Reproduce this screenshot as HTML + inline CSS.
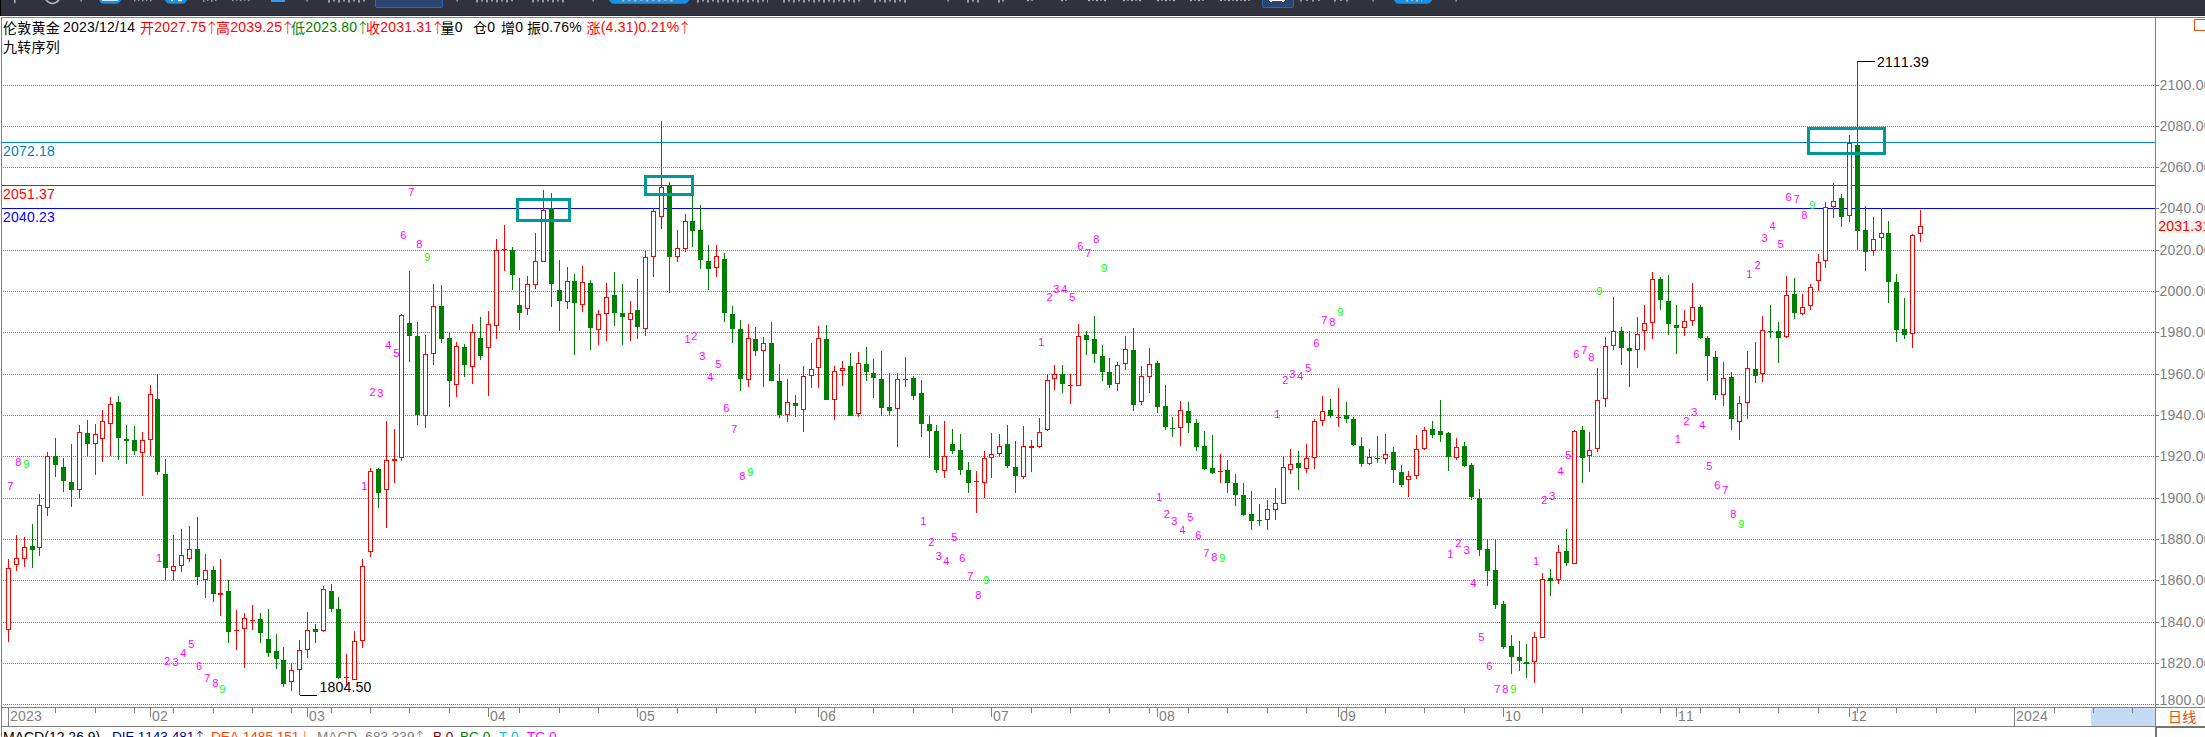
<!DOCTYPE html><html><head><meta charset="utf-8"><title>伦敦黄金 日线</title><style>
html,body{margin:0;padding:0;background:#fff;}
body{font-kerning:none;width:2205px;height:737px;overflow:hidden;position:relative;font-family:"Liberation Sans","Noto Sans CJK SC",sans-serif;}
#c{position:absolute;left:0;top:0;}
.t{position:absolute;white-space:nowrap;font-size:14px;line-height:16px;letter-spacing:0.21px}
.cj{position:relative;top:1px}.ar{font-family:"Noto Sans CJK SC",sans-serif;letter-spacing:0;margin-left:-1.5px;font-weight:300;line-height:0;vertical-align:-1px}.r{color:#ff0000}.g{color:#008000}.k{color:#000}
svg text{font-kerning:none;font-family:"Liberation Sans","Noto Sans CJK SC",sans-serif;letter-spacing:0.21px}svg text.m{letter-spacing:0}
</style></head><body>
<svg id="c" width="2205" height="737" viewBox="0 0 2205 737" shape-rendering="crispEdges">
<rect x="0" y="0" width="2205" height="16" fill="#30333e"/>
<rect x="0" y="15" width="2205" height="1" fill="#262933"/>
<rect x="0" y="0" width="1" height="16" fill="#000"/>
<g shape-rendering="auto">
<rect x="14" y="0" width="1.5" height="3.2" fill="#b4b6c2" opacity="1"/>
<rect x="13" y="1.6" width="2" height="-0.40000000000000013" fill="#b4b6c2" opacity="1"/>
<path d="M46,0 Q52.5,7 59,0" fill="none" stroke="#b4b6c2" stroke-width="1.6"/>
<rect x="80.5" y="0" width="1.2000000000000028" height="1.6" fill="#b4b6c2" opacity="1"/>
<path d="M99,0 L100,1.7999999999999998 Q101,3.8 104,3.8 L116,3.8 Q119,3.8 120,1.7999999999999998 L121,0 Z" fill="#1a8fe3"/>
<rect x="102" y="0" width="16" height="0.8" fill="#fff" opacity="1"/>
<rect x="134" y="0" width="1.5" height="1.4" fill="#b4b6c2" opacity="0.8"/>
<rect x="138" y="0" width="1.5" height="0.84" fill="#b4b6c2" opacity="0.8"/>
<rect x="142" y="0" width="1.5" height="1.4" fill="#b4b6c2" opacity="0.8"/>
<rect x="146" y="0" width="1.5" height="0.84" fill="#b4b6c2" opacity="0.8"/>
<rect x="150" y="0" width="1.5" height="1.4" fill="#b4b6c2" opacity="0.8"/>
<path d="M165,0 L166,1.7999999999999998 Q167,3.8 170,3.8 L182,3.8 Q185,3.8 186,1.7999999999999998 L187,0 Z" fill="#1a8fe3"/>
<rect x="171" y="0" width="2" height="1.2" fill="#fff" opacity="1"/>
<rect x="178" y="0" width="4" height="1.2" fill="#fff" opacity="1"/>
<rect x="203" y="0" width="1.5" height="1.8" fill="#b4b6c2" opacity="0.8"/>
<rect x="207" y="0" width="1.5" height="1.08" fill="#b4b6c2" opacity="0.8"/>
<rect x="211" y="0" width="1.5" height="1.8" fill="#b4b6c2" opacity="0.8"/>
<rect x="215" y="0" width="1.5" height="1.08" fill="#b4b6c2" opacity="0.8"/>
<rect x="232" y="0" width="1.5" height="1.2" fill="#b4b6c2" opacity="0.8"/>
<rect x="236" y="0" width="1.5" height="0.72" fill="#b4b6c2" opacity="0.8"/>
<rect x="240" y="0" width="1.5" height="1.2" fill="#b4b6c2" opacity="0.8"/>
<rect x="244" y="0" width="1.5" height="0.72" fill="#b4b6c2" opacity="0.8"/>
<rect x="248" y="0" width="1.5" height="1.2" fill="#b4b6c2" opacity="0.8"/>
<rect x="271" y="0" width="14" height="2" fill="#3a98ea" opacity="1"/>
<rect x="306.5" y="0" width="1.1999999999999886" height="1.6" fill="#b4b6c2" opacity="1"/>
<rect x="328" y="0" width="2" height="2.6" fill="#b4b6c2" opacity="0.8"/>
<rect x="333" y="0" width="2" height="1.56" fill="#b4b6c2" opacity="0.8"/>
<rect x="338" y="0" width="2" height="2.6" fill="#b4b6c2" opacity="0.8"/>
<rect x="343" y="0" width="2" height="1.56" fill="#b4b6c2" opacity="0.8"/>
<rect x="348" y="0" width="2" height="2.6" fill="#b4b6c2" opacity="0.8"/>
<rect x="353" y="0" width="2" height="1.56" fill="#b4b6c2" opacity="0.8"/>
<rect x="358" y="0" width="2" height="2.6" fill="#b4b6c2" opacity="0.8"/>
<rect x="363" y="0" width="2" height="1.56" fill="#b4b6c2" opacity="0.8"/>
<rect x="375.5" y="-3" width="67" height="10.5" rx="1.5" fill="#2a4572" stroke="#3a64a8" stroke-width="1"/>
<rect x="456.5" y="0" width="1.1999999999999886" height="1.6" fill="#b4b6c2" opacity="1"/>
<rect x="476" y="0" width="2" height="2.4" fill="#b4b6c2" opacity="0.8"/>
<rect x="481" y="0" width="2" height="1.44" fill="#b4b6c2" opacity="0.8"/>
<rect x="486" y="0" width="2" height="2.4" fill="#b4b6c2" opacity="0.8"/>
<rect x="491" y="0" width="2" height="1.44" fill="#b4b6c2" opacity="0.8"/>
<rect x="496" y="0" width="2" height="2.4" fill="#b4b6c2" opacity="0.8"/>
<rect x="501" y="0" width="2" height="1.44" fill="#b4b6c2" opacity="0.8"/>
<rect x="506" y="0" width="2" height="2.4" fill="#b4b6c2" opacity="0.8"/>
<rect x="511" y="0" width="2" height="1.44" fill="#b4b6c2" opacity="0.8"/>
<rect x="532" y="0" width="2" height="2.4" fill="#b4b6c2" opacity="0.8"/>
<rect x="537" y="0" width="2" height="1.44" fill="#b4b6c2" opacity="0.8"/>
<rect x="542" y="0" width="2" height="2.4" fill="#b4b6c2" opacity="0.8"/>
<rect x="547" y="0" width="2" height="1.44" fill="#b4b6c2" opacity="0.8"/>
<rect x="552" y="0" width="2" height="2.4" fill="#b4b6c2" opacity="0.8"/>
<rect x="557" y="0" width="2" height="1.44" fill="#b4b6c2" opacity="0.8"/>
<rect x="562" y="0" width="2" height="2.4" fill="#b4b6c2" opacity="0.8"/>
<rect x="592.5" y="0" width="1.2000000000000455" height="1.6" fill="#b4b6c2" opacity="1"/>
<path d="M609,0 L610,1.7999999999999998 Q611,3.8 614,3.8 L684,3.8 Q687,3.8 688,1.7999999999999998 L689,0 Z" fill="#1a8fe3"/>
<rect x="622" y="0" width="2.5" height="1.4" fill="#b4b6c2" opacity="1"/>
<rect x="628" y="0" width="2.5" height="0.84" fill="#b4b6c2" opacity="1"/>
<rect x="634" y="0" width="2.5" height="1.4" fill="#b4b6c2" opacity="1"/>
<rect x="640" y="0" width="2.5" height="0.84" fill="#b4b6c2" opacity="1"/>
<rect x="646" y="0" width="2.5" height="1.4" fill="#b4b6c2" opacity="1"/>
<rect x="652" y="0" width="2.5" height="0.84" fill="#b4b6c2" opacity="1"/>
<rect x="658" y="0" width="2.5" height="1.4" fill="#b4b6c2" opacity="1"/>
<rect x="664" y="0" width="2.5" height="0.84" fill="#b4b6c2" opacity="1"/>
<rect x="670" y="0" width="2.5" height="1.4" fill="#b4b6c2" opacity="1"/>
<rect x="697" y="0" width="2" height="2.6" fill="#b4b6c2" opacity="0.8"/>
<rect x="702" y="0" width="2" height="1.56" fill="#b4b6c2" opacity="0.8"/>
<rect x="707" y="0" width="2" height="2.6" fill="#b4b6c2" opacity="0.8"/>
<rect x="712" y="0" width="2" height="1.56" fill="#b4b6c2" opacity="0.8"/>
<rect x="717" y="0" width="2" height="2.6" fill="#b4b6c2" opacity="0.8"/>
<rect x="722" y="0" width="2" height="1.56" fill="#b4b6c2" opacity="0.8"/>
<rect x="727" y="0" width="2" height="2.6" fill="#b4b6c2" opacity="0.8"/>
<rect x="732" y="0" width="2" height="1.56" fill="#b4b6c2" opacity="0.8"/>
<rect x="737" y="0" width="2" height="2.6" fill="#b4b6c2" opacity="0.8"/>
<rect x="742" y="0" width="2" height="1.56" fill="#b4b6c2" opacity="0.8"/>
<rect x="747" y="0" width="2" height="2.6" fill="#b4b6c2" opacity="0.8"/>
<rect x="752" y="0" width="2" height="1.56" fill="#b4b6c2" opacity="0.8"/>
<rect x="757" y="0" width="2" height="2.6" fill="#b4b6c2" opacity="0.8"/>
<rect x="762" y="0" width="2" height="1.56" fill="#b4b6c2" opacity="0.8"/>
<rect x="767" y="0" width="1" height="2.6" fill="#b4b6c2" opacity="0.8"/>
<rect x="783" y="0" width="2" height="2.6" fill="#b4b6c2" opacity="0.8"/>
<rect x="788" y="0" width="2" height="1.56" fill="#b4b6c2" opacity="0.8"/>
<rect x="793" y="0" width="2" height="2.6" fill="#b4b6c2" opacity="0.8"/>
<rect x="798" y="0" width="2" height="1.56" fill="#b4b6c2" opacity="0.8"/>
<rect x="803" y="0" width="2" height="2.6" fill="#b4b6c2" opacity="0.8"/>
<rect x="808" y="0" width="2" height="1.56" fill="#b4b6c2" opacity="0.8"/>
<rect x="813" y="0" width="2" height="2.6" fill="#b4b6c2" opacity="0.8"/>
<rect x="818" y="0" width="2" height="1.56" fill="#b4b6c2" opacity="0.8"/>
<rect x="823" y="0" width="2" height="2.6" fill="#b4b6c2" opacity="0.8"/>
<rect x="828" y="0" width="2" height="1.56" fill="#b4b6c2" opacity="0.8"/>
<rect x="833" y="0" width="2" height="2.6" fill="#b4b6c2" opacity="0.8"/>
<rect x="838" y="0" width="2" height="1.56" fill="#b4b6c2" opacity="0.8"/>
<rect x="843" y="0" width="2" height="2.6" fill="#b4b6c2" opacity="0.8"/>
<rect x="848" y="0" width="2" height="1.56" fill="#b4b6c2" opacity="0.8"/>
<rect x="853" y="0" width="2" height="2.6" fill="#b4b6c2" opacity="0.8"/>
<rect x="858" y="0" width="2" height="1.56" fill="#b4b6c2" opacity="0.8"/>
<rect x="874" y="0" width="2" height="2.6" fill="#b4b6c2" opacity="0.8"/>
<rect x="879" y="0" width="2" height="1.56" fill="#b4b6c2" opacity="0.8"/>
<rect x="884" y="0" width="2" height="2.6" fill="#b4b6c2" opacity="0.8"/>
<rect x="889" y="0" width="2" height="1.56" fill="#b4b6c2" opacity="0.8"/>
<rect x="894" y="0" width="2" height="2.6" fill="#b4b6c2" opacity="0.8"/>
<rect x="899" y="0" width="2" height="1.56" fill="#b4b6c2" opacity="0.8"/>
<rect x="904" y="0" width="2" height="2.6" fill="#b4b6c2" opacity="0.8"/>
<rect x="947.5" y="0" width="1.2000000000000455" height="1.6" fill="#b4b6c2" opacity="1"/>
<rect x="967" y="0" width="2" height="2.6" fill="#b4b6c2" opacity="0.8"/>
<rect x="972" y="0" width="2" height="1.56" fill="#b4b6c2" opacity="0.8"/>
<rect x="977" y="0" width="2" height="2.6" fill="#b4b6c2" opacity="0.8"/>
<rect x="998" y="0" width="2" height="2.6" fill="#b4b6c2" opacity="0.8"/>
<rect x="1002" y="0" width="2" height="1.56" fill="#b4b6c2" opacity="0.8"/>
<rect x="1027" y="0" width="2" height="1.2" fill="#b4b6c2" opacity="1"/>
<rect x="1031" y="0" width="2" height="0.72" fill="#b4b6c2" opacity="1"/>
<rect x="1061" y="0" width="2" height="1.2" fill="#b4b6c2" opacity="1"/>
<rect x="1065" y="0" width="2" height="0.72" fill="#b4b6c2" opacity="1"/>
<rect x="1088" y="0" width="2" height="1.2" fill="#b4b6c2" opacity="1"/>
<rect x="1092" y="0" width="2" height="0.72" fill="#b4b6c2" opacity="1"/>
<rect x="1096" y="0" width="2" height="1.2" fill="#b4b6c2" opacity="1"/>
<rect x="1100" y="0" width="2" height="0.72" fill="#b4b6c2" opacity="1"/>
<rect x="1104" y="0" width="2" height="1.2" fill="#b4b6c2" opacity="1"/>
<rect x="1123" y="0" width="2" height="1.2" fill="#b4b6c2" opacity="1"/>
<rect x="1127" y="0" width="2" height="0.72" fill="#b4b6c2" opacity="1"/>
<rect x="1131" y="0" width="2" height="1.2" fill="#b4b6c2" opacity="1"/>
<rect x="1135" y="0" width="2" height="0.72" fill="#b4b6c2" opacity="1"/>
<rect x="1139" y="0" width="2" height="1.2" fill="#b4b6c2" opacity="1"/>
<rect x="1157" y="0" width="2" height="1.2" fill="#b4b6c2" opacity="1"/>
<rect x="1161" y="0" width="2" height="0.72" fill="#b4b6c2" opacity="1"/>
<rect x="1165" y="0" width="2" height="1.2" fill="#b4b6c2" opacity="1"/>
<rect x="1169" y="0" width="2" height="0.72" fill="#b4b6c2" opacity="1"/>
<rect x="1173" y="0" width="2" height="1.2" fill="#b4b6c2" opacity="1"/>
<rect x="1190" y="0" width="2" height="1.2" fill="#b4b6c2" opacity="1"/>
<rect x="1194" y="0" width="2" height="0.72" fill="#b4b6c2" opacity="1"/>
<rect x="1198" y="0" width="2" height="1.2" fill="#b4b6c2" opacity="1"/>
<rect x="1202" y="0" width="2" height="0.72" fill="#b4b6c2" opacity="1"/>
<rect x="1220" y="0" width="2" height="1.2" fill="#b4b6c2" opacity="1"/>
<rect x="1224" y="0" width="2" height="0.72" fill="#b4b6c2" opacity="1"/>
<rect x="1228" y="0" width="2" height="1.2" fill="#b4b6c2" opacity="1"/>
<rect x="1232" y="0" width="2" height="0.72" fill="#b4b6c2" opacity="1"/>
<rect x="1236" y="0" width="2" height="1.2" fill="#b4b6c2" opacity="1"/>
<rect x="1240" y="0" width="2" height="0.72" fill="#b4b6c2" opacity="1"/>
<rect x="1244" y="0" width="2" height="1.2" fill="#b4b6c2" opacity="1"/>
<rect x="1248" y="0" width="2" height="0.72" fill="#b4b6c2" opacity="1"/>
<rect x="1262.5" y="-3" width="31" height="10.5" rx="1.5" fill="#2a4572" stroke="#3a64a8" stroke-width="1"/>
<rect x="1269" y="0" width="16" height="1" fill="#fff" opacity="1"/>
<rect x="1270" y="0" width="2" height="2" fill="#fff" opacity="1"/>
<rect x="1282" y="0" width="2" height="2" fill="#fff" opacity="1"/>
<rect x="1300" y="0" width="2" height="1.6" fill="#b4b6c2" opacity="0.8"/>
<rect x="1306" y="0" width="2" height="0.96" fill="#b4b6c2" opacity="0.8"/>
<rect x="1312" y="0" width="2" height="1.6" fill="#b4b6c2" opacity="0.8"/>
<rect x="1318" y="0" width="2" height="0.96" fill="#b4b6c2" opacity="0.8"/>
<rect x="1334" y="0" width="2" height="1.6" fill="#b4b6c2" opacity="0.8"/>
<rect x="1340" y="0" width="2" height="0.96" fill="#b4b6c2" opacity="0.8"/>
<rect x="1346" y="0" width="2" height="1.6" fill="#b4b6c2" opacity="0.8"/>
<rect x="1372.5" y="0" width="1.2000000000000455" height="1.6" fill="#b4b6c2" opacity="1"/>
<path d="M1394,0 L1395,1.7999999999999998 Q1396,3.8 1399,3.8 L1427,3.8 Q1430,3.8 1431,1.7999999999999998 L1432,0 Z" fill="#1a8fe3"/>
<rect x="1406" y="0" width="2" height="1.6" fill="#b4b6c2" opacity="1"/>
<rect x="1411" y="0" width="2" height="0.96" fill="#b4b6c2" opacity="1"/>
<rect x="1416" y="0" width="2" height="1.6" fill="#b4b6c2" opacity="1"/>
<rect x="1421" y="0" width="1" height="0.96" fill="#b4b6c2" opacity="1"/>
<rect x="1455.5" y="0" width="1.2000000000000455" height="1.6" fill="#b4b6c2" opacity="1"/>
</g>
<rect x="1" y="17" width="2204" height="1" fill="#808080"/>
<rect x="1" y="17" width="1" height="720" fill="#808080"/>
<rect x="2155" y="17" width="1" height="710" fill="#808080"/>
<rect x="2" y="707" width="2203" height="1" fill="#808080"/>
<rect x="2" y="726" width="2154" height="1" fill="#808080"/>
<rect x="2155" y="726" width="50" height="2" fill="#747474"/>
<rect x="2155" y="726" width="2" height="11" fill="#747474"/>
<rect x="2091" y="708" width="64" height="18" rx="2.5" fill="#c5daf5" shape-rendering="auto"/>
<line x1="3" y1="85.5" x2="2155" y2="85.5" stroke="#7a7a7a" stroke-width="1" stroke-dasharray="1 1"/>
<rect x="2156" y="85" width="3" height="1" fill="#808080"/>
<line x1="3" y1="126.5" x2="2155" y2="126.5" stroke="#7a7a7a" stroke-width="1" stroke-dasharray="1 1"/>
<rect x="2156" y="126" width="3" height="1" fill="#808080"/>
<line x1="3" y1="167.5" x2="2155" y2="167.5" stroke="#7a7a7a" stroke-width="1" stroke-dasharray="1 1"/>
<rect x="2156" y="167" width="3" height="1" fill="#808080"/>
<line x1="3" y1="208.5" x2="2155" y2="208.5" stroke="#7a7a7a" stroke-width="1" stroke-dasharray="1 1"/>
<rect x="2156" y="208" width="3" height="1" fill="#808080"/>
<line x1="3" y1="250.5" x2="2155" y2="250.5" stroke="#7a7a7a" stroke-width="1" stroke-dasharray="1 1"/>
<rect x="2156" y="250" width="3" height="1" fill="#808080"/>
<line x1="3" y1="291.5" x2="2155" y2="291.5" stroke="#7a7a7a" stroke-width="1" stroke-dasharray="1 1"/>
<rect x="2156" y="291" width="3" height="1" fill="#808080"/>
<line x1="3" y1="332.5" x2="2155" y2="332.5" stroke="#7a7a7a" stroke-width="1" stroke-dasharray="1 1"/>
<rect x="2156" y="332" width="3" height="1" fill="#808080"/>
<line x1="3" y1="374.5" x2="2155" y2="374.5" stroke="#7a7a7a" stroke-width="1" stroke-dasharray="1 1"/>
<rect x="2156" y="374" width="3" height="1" fill="#808080"/>
<line x1="3" y1="415.5" x2="2155" y2="415.5" stroke="#7a7a7a" stroke-width="1" stroke-dasharray="1 1"/>
<rect x="2156" y="415" width="3" height="1" fill="#808080"/>
<line x1="3" y1="456.5" x2="2155" y2="456.5" stroke="#7a7a7a" stroke-width="1" stroke-dasharray="1 1"/>
<rect x="2156" y="456" width="3" height="1" fill="#808080"/>
<line x1="3" y1="498.5" x2="2155" y2="498.5" stroke="#7a7a7a" stroke-width="1" stroke-dasharray="1 1"/>
<rect x="2156" y="498" width="3" height="1" fill="#808080"/>
<line x1="3" y1="539.5" x2="2155" y2="539.5" stroke="#7a7a7a" stroke-width="1" stroke-dasharray="1 1"/>
<rect x="2156" y="539" width="3" height="1" fill="#808080"/>
<line x1="3" y1="580.5" x2="2155" y2="580.5" stroke="#7a7a7a" stroke-width="1" stroke-dasharray="1 1"/>
<rect x="2156" y="580" width="3" height="1" fill="#808080"/>
<line x1="3" y1="622.5" x2="2155" y2="622.5" stroke="#7a7a7a" stroke-width="1" stroke-dasharray="1 1"/>
<rect x="2156" y="622" width="3" height="1" fill="#808080"/>
<line x1="3" y1="663.5" x2="2155" y2="663.5" stroke="#7a7a7a" stroke-width="1" stroke-dasharray="1 1"/>
<rect x="2156" y="663" width="3" height="1" fill="#808080"/>
<line x1="3" y1="704.5" x2="2155" y2="704.5" stroke="#7a7a7a" stroke-width="1" stroke-dasharray="1 1"/>
<rect x="2156" y="704" width="3" height="1" fill="#808080"/>
<rect x="2" y="142" width="2153" height="1" fill="#0080c0"/>
<rect x="2" y="185" width="2153" height="1" fill="#ff0000"/>
<rect x="2" y="208" width="2153" height="1" fill="#0000ff"/>
<rect x="8" y="559" width="1" height="83" fill="#ff0000"/>
<rect x="6" y="568" width="5" height="62" fill="#ff0000"/>
<rect x="7" y="569" width="3" height="60" fill="#fff"/>
<rect x="16" y="535" width="1" height="36" fill="#ff0000"/>
<rect x="14" y="558" width="5" height="7" fill="#ff0000"/>
<rect x="15" y="559" width="3" height="5" fill="#fff"/>
<rect x="24" y="537" width="1" height="30" fill="#ff0000"/>
<rect x="22" y="547" width="5" height="12" fill="#ff0000"/>
<rect x="23" y="548" width="3" height="10" fill="#fff"/>
<rect x="32" y="524" width="1" height="44" fill="#008000"/>
<rect x="30" y="546" width="5" height="4" fill="#008000"/>
<rect x="39" y="494" width="1" height="62" fill="#ff0000"/>
<rect x="37" y="505" width="5" height="43" fill="#ff0000"/>
<rect x="38" y="506" width="3" height="41" fill="#fff"/>
<rect x="47" y="452" width="1" height="64" fill="#ff0000"/>
<rect x="45" y="456" width="5" height="52" fill="#ff0000"/>
<rect x="46" y="457" width="3" height="50" fill="#fff"/>
<rect x="55" y="438" width="1" height="39" fill="#008000"/>
<rect x="53" y="456" width="5" height="9" fill="#008000"/>
<rect x="63" y="458" width="1" height="34" fill="#008000"/>
<rect x="61" y="467" width="5" height="14" fill="#008000"/>
<rect x="71" y="444" width="1" height="63" fill="#008000"/>
<rect x="69" y="482" width="5" height="8" fill="#008000"/>
<rect x="79" y="425" width="1" height="73" fill="#ff0000"/>
<rect x="77" y="432" width="5" height="58" fill="#ff0000"/>
<rect x="78" y="433" width="3" height="56" fill="#fff"/>
<rect x="87" y="420" width="1" height="36" fill="#008000"/>
<rect x="85" y="433" width="5" height="11" fill="#008000"/>
<rect x="95" y="424" width="1" height="51" fill="#ff0000"/>
<rect x="93" y="434" width="5" height="10" fill="#ff0000"/>
<rect x="94" y="435" width="3" height="8" fill="#fff"/>
<rect x="102" y="410" width="1" height="52" fill="#ff0000"/>
<rect x="100" y="421" width="5" height="18" fill="#ff0000"/>
<rect x="101" y="422" width="3" height="16" fill="#fff"/>
<rect x="110" y="397" width="1" height="59" fill="#ff0000"/>
<rect x="108" y="404" width="5" height="20" fill="#ff0000"/>
<rect x="109" y="405" width="3" height="18" fill="#fff"/>
<rect x="118" y="396" width="1" height="64" fill="#008000"/>
<rect x="116" y="402" width="5" height="36" fill="#008000"/>
<rect x="126" y="425" width="1" height="39" fill="#008000"/>
<rect x="124" y="439" width="5" height="2" fill="#008000"/>
<rect x="134" y="426" width="1" height="29" fill="#008000"/>
<rect x="132" y="440" width="5" height="11" fill="#008000"/>
<rect x="142" y="432" width="1" height="64" fill="#ff0000"/>
<rect x="140" y="440" width="5" height="13" fill="#ff0000"/>
<rect x="141" y="441" width="3" height="11" fill="#fff"/>
<rect x="150" y="385" width="1" height="71" fill="#ff0000"/>
<rect x="148" y="394" width="5" height="46" fill="#ff0000"/>
<rect x="149" y="395" width="3" height="44" fill="#fff"/>
<rect x="157" y="374" width="1" height="101" fill="#008000"/>
<rect x="155" y="399" width="5" height="73" fill="#008000"/>
<rect x="165" y="459" width="1" height="121" fill="#008000"/>
<rect x="163" y="474" width="5" height="94" fill="#008000"/>
<rect x="173" y="535" width="1" height="46" fill="#ff0000"/>
<rect x="171" y="566" width="5" height="5" fill="#ff0000"/>
<rect x="172" y="567" width="3" height="3" fill="#fff"/>
<rect x="181" y="529" width="1" height="43" fill="#ff0000"/>
<rect x="179" y="555" width="5" height="11" fill="#ff0000"/>
<rect x="180" y="556" width="3" height="9" fill="#fff"/>
<rect x="189" y="526" width="1" height="36" fill="#ff0000"/>
<rect x="187" y="549" width="5" height="10" fill="#ff0000"/>
<rect x="188" y="550" width="3" height="8" fill="#fff"/>
<rect x="197" y="517" width="1" height="68" fill="#008000"/>
<rect x="195" y="549" width="5" height="28" fill="#008000"/>
<rect x="205" y="554" width="1" height="44" fill="#ff0000"/>
<rect x="203" y="570" width="5" height="10" fill="#ff0000"/>
<rect x="204" y="571" width="3" height="8" fill="#fff"/>
<rect x="213" y="566" width="1" height="36" fill="#008000"/>
<rect x="211" y="570" width="5" height="24" fill="#008000"/>
<rect x="220" y="559" width="1" height="57" fill="#ff0000"/>
<rect x="218" y="593" width="5" height="2" fill="#ff0000"/>
<rect x="228" y="580" width="1" height="63" fill="#008000"/>
<rect x="226" y="591" width="5" height="41" fill="#008000"/>
<rect x="236" y="610" width="1" height="40" fill="#ff0000"/>
<rect x="234" y="630" width="5" height="1" fill="#ff0000"/>
<rect x="244" y="613" width="1" height="55" fill="#ff0000"/>
<rect x="242" y="618" width="5" height="11" fill="#ff0000"/>
<rect x="243" y="619" width="3" height="9" fill="#fff"/>
<rect x="252" y="605" width="1" height="25" fill="#ff0000"/>
<rect x="250" y="620" width="5" height="1" fill="#ff0000"/>
<rect x="260" y="613" width="1" height="30" fill="#008000"/>
<rect x="258" y="619" width="5" height="14" fill="#008000"/>
<rect x="268" y="609" width="1" height="48" fill="#008000"/>
<rect x="266" y="639" width="5" height="14" fill="#008000"/>
<rect x="276" y="634" width="1" height="35" fill="#008000"/>
<rect x="274" y="651" width="5" height="8" fill="#008000"/>
<rect x="283" y="647" width="1" height="40" fill="#008000"/>
<rect x="281" y="660" width="5" height="24" fill="#008000"/>
<rect x="291" y="663" width="1" height="28" fill="#ff0000"/>
<rect x="289" y="670" width="5" height="12" fill="#ff0000"/>
<rect x="290" y="671" width="3" height="10" fill="#fff"/>
<rect x="299" y="640" width="1" height="55" fill="#ff0000"/>
<rect x="297" y="650" width="5" height="20" fill="#ff0000"/>
<rect x="298" y="651" width="3" height="18" fill="#fff"/>
<rect x="307" y="612" width="1" height="46" fill="#ff0000"/>
<rect x="305" y="630" width="5" height="20" fill="#ff0000"/>
<rect x="306" y="631" width="3" height="18" fill="#fff"/>
<rect x="315" y="624" width="1" height="19" fill="#008000"/>
<rect x="313" y="629" width="5" height="3" fill="#008000"/>
<rect x="323" y="586" width="1" height="46" fill="#ff0000"/>
<rect x="321" y="589" width="5" height="42" fill="#ff0000"/>
<rect x="322" y="590" width="3" height="40" fill="#fff"/>
<rect x="331" y="584" width="1" height="28" fill="#008000"/>
<rect x="329" y="591" width="5" height="18" fill="#008000"/>
<rect x="338" y="597" width="1" height="82" fill="#008000"/>
<rect x="336" y="609" width="5" height="69" fill="#008000"/>
<rect x="346" y="654" width="1" height="32" fill="#ff0000"/>
<rect x="344" y="677" width="5" height="1" fill="#ff0000"/>
<rect x="354" y="631" width="1" height="49" fill="#ff0000"/>
<rect x="352" y="641" width="5" height="39" fill="#ff0000"/>
<rect x="353" y="642" width="3" height="37" fill="#fff"/>
<rect x="362" y="559" width="1" height="89" fill="#ff0000"/>
<rect x="360" y="566" width="5" height="75" fill="#ff0000"/>
<rect x="361" y="567" width="3" height="73" fill="#fff"/>
<rect x="370" y="468" width="1" height="89" fill="#ff0000"/>
<rect x="368" y="471" width="5" height="81" fill="#ff0000"/>
<rect x="369" y="472" width="3" height="79" fill="#fff"/>
<rect x="378" y="468" width="1" height="40" fill="#008000"/>
<rect x="376" y="469" width="5" height="24" fill="#008000"/>
<rect x="386" y="421" width="1" height="107" fill="#ff0000"/>
<rect x="384" y="460" width="5" height="30" fill="#ff0000"/>
<rect x="385" y="461" width="3" height="28" fill="#fff"/>
<rect x="394" y="429" width="1" height="54" fill="#ff0000"/>
<rect x="392" y="459" width="5" height="2" fill="#ff0000"/>
<rect x="401" y="314" width="1" height="147" fill="#ff0000"/>
<rect x="399" y="315" width="5" height="143" fill="#ff0000"/>
<rect x="400" y="316" width="3" height="141" fill="#fff"/>
<rect x="409" y="271" width="1" height="91" fill="#008000"/>
<rect x="407" y="323" width="5" height="13" fill="#008000"/>
<rect x="417" y="322" width="1" height="103" fill="#008000"/>
<rect x="415" y="336" width="5" height="79" fill="#008000"/>
<rect x="425" y="335" width="1" height="93" fill="#ff0000"/>
<rect x="423" y="354" width="5" height="62" fill="#ff0000"/>
<rect x="424" y="355" width="3" height="60" fill="#fff"/>
<rect x="433" y="284" width="1" height="81" fill="#ff0000"/>
<rect x="431" y="306" width="5" height="48" fill="#ff0000"/>
<rect x="432" y="307" width="3" height="46" fill="#fff"/>
<rect x="441" y="285" width="1" height="58" fill="#008000"/>
<rect x="439" y="306" width="5" height="33" fill="#008000"/>
<rect x="449" y="332" width="1" height="75" fill="#008000"/>
<rect x="447" y="338" width="5" height="43" fill="#008000"/>
<rect x="456" y="342" width="1" height="55" fill="#ff0000"/>
<rect x="454" y="346" width="5" height="39" fill="#ff0000"/>
<rect x="455" y="347" width="3" height="37" fill="#fff"/>
<rect x="464" y="344" width="1" height="33" fill="#008000"/>
<rect x="462" y="347" width="5" height="18" fill="#008000"/>
<rect x="472" y="324" width="1" height="60" fill="#ff0000"/>
<rect x="470" y="332" width="5" height="35" fill="#ff0000"/>
<rect x="471" y="333" width="3" height="33" fill="#fff"/>
<rect x="480" y="317" width="1" height="43" fill="#008000"/>
<rect x="478" y="338" width="5" height="18" fill="#008000"/>
<rect x="488" y="311" width="1" height="85" fill="#ff0000"/>
<rect x="486" y="324" width="5" height="24" fill="#ff0000"/>
<rect x="487" y="325" width="3" height="22" fill="#fff"/>
<rect x="496" y="239" width="1" height="100" fill="#ff0000"/>
<rect x="494" y="250" width="5" height="76" fill="#ff0000"/>
<rect x="495" y="251" width="3" height="74" fill="#fff"/>
<rect x="504" y="225" width="1" height="46" fill="#ff0000"/>
<rect x="502" y="249" width="5" height="1" fill="#ff0000"/>
<rect x="512" y="247" width="1" height="43" fill="#008000"/>
<rect x="510" y="250" width="5" height="25" fill="#008000"/>
<rect x="519" y="278" width="1" height="52" fill="#008000"/>
<rect x="517" y="305" width="5" height="8" fill="#008000"/>
<rect x="527" y="276" width="1" height="39" fill="#ff0000"/>
<rect x="525" y="284" width="5" height="25" fill="#ff0000"/>
<rect x="526" y="285" width="3" height="23" fill="#fff"/>
<rect x="535" y="233" width="1" height="56" fill="#ff0000"/>
<rect x="533" y="261" width="5" height="24" fill="#ff0000"/>
<rect x="534" y="262" width="3" height="22" fill="#fff"/>
<rect x="543" y="190" width="1" height="72" fill="#ff0000"/>
<rect x="541" y="210" width="5" height="52" fill="#ff0000"/>
<rect x="542" y="211" width="3" height="50" fill="#fff"/>
<rect x="551" y="193" width="1" height="114" fill="#008000"/>
<rect x="549" y="208" width="5" height="76" fill="#008000"/>
<rect x="559" y="260" width="1" height="71" fill="#008000"/>
<rect x="557" y="290" width="5" height="11" fill="#008000"/>
<rect x="567" y="267" width="1" height="42" fill="#ff0000"/>
<rect x="565" y="281" width="5" height="21" fill="#ff0000"/>
<rect x="566" y="282" width="3" height="19" fill="#fff"/>
<rect x="574" y="274" width="1" height="81" fill="#008000"/>
<rect x="572" y="281" width="5" height="22" fill="#008000"/>
<rect x="582" y="266" width="1" height="46" fill="#ff0000"/>
<rect x="580" y="282" width="5" height="23" fill="#ff0000"/>
<rect x="581" y="283" width="3" height="21" fill="#fff"/>
<rect x="590" y="280" width="1" height="70" fill="#008000"/>
<rect x="588" y="283" width="5" height="45" fill="#008000"/>
<rect x="598" y="310" width="1" height="35" fill="#ff0000"/>
<rect x="596" y="314" width="5" height="16" fill="#ff0000"/>
<rect x="597" y="315" width="3" height="14" fill="#fff"/>
<rect x="606" y="283" width="1" height="58" fill="#ff0000"/>
<rect x="604" y="297" width="5" height="17" fill="#ff0000"/>
<rect x="605" y="298" width="3" height="15" fill="#fff"/>
<rect x="614" y="272" width="1" height="54" fill="#008000"/>
<rect x="612" y="295" width="5" height="18" fill="#008000"/>
<rect x="622" y="284" width="1" height="61" fill="#008000"/>
<rect x="620" y="313" width="5" height="4" fill="#008000"/>
<rect x="630" y="301" width="1" height="40" fill="#ff0000"/>
<rect x="628" y="313" width="5" height="7" fill="#ff0000"/>
<rect x="629" y="314" width="3" height="5" fill="#fff"/>
<rect x="637" y="279" width="1" height="60" fill="#008000"/>
<rect x="635" y="310" width="5" height="17" fill="#008000"/>
<rect x="645" y="251" width="1" height="85" fill="#ff0000"/>
<rect x="643" y="257" width="5" height="72" fill="#ff0000"/>
<rect x="644" y="258" width="3" height="70" fill="#fff"/>
<rect x="653" y="208" width="1" height="69" fill="#ff0000"/>
<rect x="651" y="211" width="5" height="46" fill="#ff0000"/>
<rect x="652" y="212" width="3" height="44" fill="#fff"/>
<rect x="661" y="121" width="1" height="108" fill="#ff0000"/>
<rect x="659" y="187" width="5" height="30" fill="#ff0000"/>
<rect x="660" y="188" width="3" height="28" fill="#fff"/>
<rect x="669" y="182" width="1" height="111" fill="#008000"/>
<rect x="667" y="185" width="5" height="72" fill="#008000"/>
<rect x="677" y="230" width="1" height="32" fill="#ff0000"/>
<rect x="675" y="248" width="5" height="9" fill="#ff0000"/>
<rect x="676" y="249" width="3" height="7" fill="#fff"/>
<rect x="685" y="214" width="1" height="38" fill="#ff0000"/>
<rect x="683" y="221" width="5" height="28" fill="#ff0000"/>
<rect x="684" y="222" width="3" height="26" fill="#fff"/>
<rect x="692" y="194" width="1" height="53" fill="#008000"/>
<rect x="690" y="221" width="5" height="10" fill="#008000"/>
<rect x="700" y="205" width="1" height="64" fill="#008000"/>
<rect x="698" y="230" width="5" height="30" fill="#008000"/>
<rect x="708" y="245" width="1" height="45" fill="#008000"/>
<rect x="706" y="261" width="5" height="8" fill="#008000"/>
<rect x="716" y="245" width="1" height="32" fill="#ff0000"/>
<rect x="714" y="256" width="5" height="12" fill="#ff0000"/>
<rect x="715" y="257" width="3" height="10" fill="#fff"/>
<rect x="724" y="253" width="1" height="69" fill="#008000"/>
<rect x="722" y="259" width="5" height="54" fill="#008000"/>
<rect x="732" y="306" width="1" height="37" fill="#008000"/>
<rect x="730" y="314" width="5" height="15" fill="#008000"/>
<rect x="740" y="320" width="1" height="71" fill="#008000"/>
<rect x="738" y="329" width="5" height="50" fill="#008000"/>
<rect x="748" y="324" width="1" height="63" fill="#ff0000"/>
<rect x="746" y="338" width="5" height="42" fill="#ff0000"/>
<rect x="747" y="339" width="3" height="40" fill="#fff"/>
<rect x="755" y="327" width="1" height="29" fill="#008000"/>
<rect x="753" y="339" width="5" height="12" fill="#008000"/>
<rect x="763" y="337" width="1" height="50" fill="#ff0000"/>
<rect x="761" y="343" width="5" height="8" fill="#ff0000"/>
<rect x="762" y="344" width="3" height="6" fill="#fff"/>
<rect x="771" y="322" width="1" height="59" fill="#008000"/>
<rect x="769" y="343" width="5" height="38" fill="#008000"/>
<rect x="779" y="364" width="1" height="54" fill="#008000"/>
<rect x="777" y="381" width="5" height="34" fill="#008000"/>
<rect x="787" y="379" width="1" height="43" fill="#ff0000"/>
<rect x="785" y="402" width="5" height="13" fill="#ff0000"/>
<rect x="786" y="403" width="3" height="11" fill="#fff"/>
<rect x="795" y="395" width="1" height="22" fill="#008000"/>
<rect x="793" y="403" width="5" height="3" fill="#008000"/>
<rect x="803" y="366" width="1" height="66" fill="#ff0000"/>
<rect x="801" y="376" width="5" height="34" fill="#ff0000"/>
<rect x="802" y="377" width="3" height="32" fill="#fff"/>
<rect x="811" y="343" width="1" height="45" fill="#ff0000"/>
<rect x="809" y="369" width="5" height="7" fill="#ff0000"/>
<rect x="810" y="370" width="3" height="5" fill="#fff"/>
<rect x="818" y="326" width="1" height="62" fill="#ff0000"/>
<rect x="816" y="338" width="5" height="30" fill="#ff0000"/>
<rect x="817" y="339" width="3" height="28" fill="#fff"/>
<rect x="826" y="325" width="1" height="75" fill="#008000"/>
<rect x="824" y="339" width="5" height="61" fill="#008000"/>
<rect x="834" y="366" width="1" height="54" fill="#ff0000"/>
<rect x="832" y="371" width="5" height="29" fill="#ff0000"/>
<rect x="833" y="372" width="3" height="27" fill="#fff"/>
<rect x="842" y="361" width="1" height="25" fill="#ff0000"/>
<rect x="840" y="368" width="5" height="3" fill="#ff0000"/>
<rect x="841" y="369" width="3" height="1" fill="#fff"/>
<rect x="850" y="353" width="1" height="63" fill="#008000"/>
<rect x="848" y="366" width="5" height="50" fill="#008000"/>
<rect x="858" y="352" width="1" height="65" fill="#ff0000"/>
<rect x="856" y="363" width="5" height="51" fill="#ff0000"/>
<rect x="857" y="364" width="3" height="49" fill="#fff"/>
<rect x="866" y="347" width="1" height="34" fill="#008000"/>
<rect x="864" y="364" width="5" height="8" fill="#008000"/>
<rect x="873" y="359" width="1" height="39" fill="#008000"/>
<rect x="871" y="373" width="5" height="5" fill="#008000"/>
<rect x="881" y="351" width="1" height="65" fill="#008000"/>
<rect x="879" y="379" width="5" height="29" fill="#008000"/>
<rect x="889" y="373" width="1" height="43" fill="#008000"/>
<rect x="887" y="407" width="5" height="4" fill="#008000"/>
<rect x="897" y="373" width="1" height="74" fill="#ff0000"/>
<rect x="895" y="379" width="5" height="30" fill="#ff0000"/>
<rect x="896" y="380" width="3" height="28" fill="#fff"/>
<rect x="905" y="357" width="1" height="30" fill="#008000"/>
<rect x="903" y="379" width="5" height="1" fill="#008000"/>
<rect x="913" y="376" width="1" height="24" fill="#008000"/>
<rect x="911" y="378" width="5" height="18" fill="#008000"/>
<rect x="921" y="380" width="1" height="57" fill="#008000"/>
<rect x="919" y="393" width="5" height="31" fill="#008000"/>
<rect x="929" y="416" width="1" height="42" fill="#008000"/>
<rect x="927" y="424" width="5" height="7" fill="#008000"/>
<rect x="936" y="425" width="1" height="48" fill="#008000"/>
<rect x="934" y="431" width="5" height="39" fill="#008000"/>
<rect x="944" y="421" width="1" height="57" fill="#ff0000"/>
<rect x="942" y="456" width="5" height="15" fill="#ff0000"/>
<rect x="943" y="457" width="3" height="13" fill="#fff"/>
<rect x="952" y="429" width="1" height="25" fill="#008000"/>
<rect x="950" y="444" width="5" height="7" fill="#008000"/>
<rect x="960" y="434" width="1" height="41" fill="#008000"/>
<rect x="958" y="450" width="5" height="20" fill="#008000"/>
<rect x="968" y="462" width="1" height="31" fill="#008000"/>
<rect x="966" y="470" width="5" height="13" fill="#008000"/>
<rect x="976" y="471" width="1" height="42" fill="#ff0000"/>
<rect x="974" y="481" width="5" height="1" fill="#ff0000"/>
<rect x="984" y="451" width="1" height="47" fill="#ff0000"/>
<rect x="982" y="458" width="5" height="25" fill="#ff0000"/>
<rect x="983" y="459" width="3" height="23" fill="#fff"/>
<rect x="991" y="433" width="1" height="45" fill="#ff0000"/>
<rect x="989" y="454" width="5" height="4" fill="#ff0000"/>
<rect x="990" y="455" width="3" height="2" fill="#fff"/>
<rect x="999" y="434" width="1" height="23" fill="#ff0000"/>
<rect x="997" y="446" width="5" height="8" fill="#ff0000"/>
<rect x="998" y="447" width="3" height="6" fill="#fff"/>
<rect x="1007" y="425" width="1" height="43" fill="#008000"/>
<rect x="1005" y="444" width="5" height="22" fill="#008000"/>
<rect x="1015" y="441" width="1" height="52" fill="#008000"/>
<rect x="1013" y="467" width="5" height="9" fill="#008000"/>
<rect x="1023" y="426" width="1" height="53" fill="#ff0000"/>
<rect x="1021" y="446" width="5" height="31" fill="#ff0000"/>
<rect x="1022" y="447" width="3" height="29" fill="#fff"/>
<rect x="1031" y="440" width="1" height="32" fill="#ff0000"/>
<rect x="1029" y="446" width="5" height="2" fill="#ff0000"/>
<rect x="1039" y="418" width="1" height="30" fill="#ff0000"/>
<rect x="1037" y="432" width="5" height="15" fill="#ff0000"/>
<rect x="1038" y="433" width="3" height="13" fill="#fff"/>
<rect x="1047" y="374" width="1" height="57" fill="#ff0000"/>
<rect x="1045" y="380" width="5" height="50" fill="#ff0000"/>
<rect x="1046" y="381" width="3" height="48" fill="#fff"/>
<rect x="1054" y="365" width="1" height="25" fill="#ff0000"/>
<rect x="1052" y="374" width="5" height="5" fill="#ff0000"/>
<rect x="1053" y="375" width="3" height="3" fill="#fff"/>
<rect x="1062" y="365" width="1" height="28" fill="#008000"/>
<rect x="1060" y="374" width="5" height="10" fill="#008000"/>
<rect x="1070" y="374" width="1" height="30" fill="#ff0000"/>
<rect x="1068" y="385" width="5" height="1" fill="#ff0000"/>
<rect x="1078" y="324" width="1" height="62" fill="#ff0000"/>
<rect x="1076" y="336" width="5" height="50" fill="#ff0000"/>
<rect x="1077" y="337" width="3" height="48" fill="#fff"/>
<rect x="1086" y="331" width="1" height="24" fill="#008000"/>
<rect x="1084" y="335" width="5" height="5" fill="#008000"/>
<rect x="1094" y="316" width="1" height="47" fill="#008000"/>
<rect x="1092" y="339" width="5" height="15" fill="#008000"/>
<rect x="1102" y="345" width="1" height="36" fill="#008000"/>
<rect x="1100" y="356" width="5" height="16" fill="#008000"/>
<rect x="1109" y="358" width="1" height="30" fill="#008000"/>
<rect x="1107" y="372" width="5" height="13" fill="#008000"/>
<rect x="1117" y="362" width="1" height="29" fill="#ff0000"/>
<rect x="1115" y="365" width="5" height="19" fill="#ff0000"/>
<rect x="1116" y="366" width="3" height="17" fill="#fff"/>
<rect x="1125" y="336" width="1" height="34" fill="#ff0000"/>
<rect x="1123" y="349" width="5" height="15" fill="#ff0000"/>
<rect x="1124" y="350" width="3" height="13" fill="#fff"/>
<rect x="1133" y="328" width="1" height="83" fill="#008000"/>
<rect x="1131" y="350" width="5" height="55" fill="#008000"/>
<rect x="1141" y="366" width="1" height="39" fill="#ff0000"/>
<rect x="1139" y="376" width="5" height="26" fill="#ff0000"/>
<rect x="1140" y="377" width="3" height="24" fill="#fff"/>
<rect x="1149" y="348" width="1" height="45" fill="#ff0000"/>
<rect x="1147" y="364" width="5" height="13" fill="#ff0000"/>
<rect x="1148" y="365" width="3" height="11" fill="#fff"/>
<rect x="1157" y="361" width="1" height="52" fill="#008000"/>
<rect x="1155" y="363" width="5" height="44" fill="#008000"/>
<rect x="1165" y="385" width="1" height="45" fill="#008000"/>
<rect x="1163" y="406" width="5" height="21" fill="#008000"/>
<rect x="1172" y="417" width="1" height="20" fill="#008000"/>
<rect x="1170" y="428" width="5" height="1" fill="#008000"/>
<rect x="1180" y="401" width="1" height="45" fill="#ff0000"/>
<rect x="1178" y="410" width="5" height="18" fill="#ff0000"/>
<rect x="1179" y="411" width="3" height="16" fill="#fff"/>
<rect x="1188" y="402" width="1" height="31" fill="#008000"/>
<rect x="1186" y="411" width="5" height="12" fill="#008000"/>
<rect x="1196" y="419" width="1" height="32" fill="#008000"/>
<rect x="1194" y="423" width="5" height="24" fill="#008000"/>
<rect x="1204" y="431" width="1" height="39" fill="#008000"/>
<rect x="1202" y="446" width="5" height="23" fill="#008000"/>
<rect x="1212" y="435" width="1" height="39" fill="#008000"/>
<rect x="1210" y="468" width="5" height="5" fill="#008000"/>
<rect x="1220" y="454" width="1" height="29" fill="#ff0000"/>
<rect x="1218" y="471" width="5" height="1" fill="#ff0000"/>
<rect x="1227" y="460" width="1" height="33" fill="#008000"/>
<rect x="1225" y="470" width="5" height="13" fill="#008000"/>
<rect x="1235" y="474" width="1" height="32" fill="#008000"/>
<rect x="1233" y="483" width="5" height="12" fill="#008000"/>
<rect x="1243" y="483" width="1" height="33" fill="#008000"/>
<rect x="1241" y="495" width="5" height="20" fill="#008000"/>
<rect x="1251" y="491" width="1" height="39" fill="#008000"/>
<rect x="1249" y="514" width="5" height="7" fill="#008000"/>
<rect x="1259" y="504" width="1" height="22" fill="#008000"/>
<rect x="1257" y="520" width="5" height="1" fill="#008000"/>
<rect x="1267" y="500" width="1" height="30" fill="#ff0000"/>
<rect x="1265" y="509" width="5" height="11" fill="#ff0000"/>
<rect x="1266" y="510" width="3" height="9" fill="#fff"/>
<rect x="1275" y="488" width="1" height="32" fill="#ff0000"/>
<rect x="1273" y="503" width="5" height="7" fill="#ff0000"/>
<rect x="1274" y="504" width="3" height="5" fill="#fff"/>
<rect x="1283" y="456" width="1" height="48" fill="#ff0000"/>
<rect x="1281" y="467" width="5" height="37" fill="#ff0000"/>
<rect x="1282" y="468" width="3" height="35" fill="#fff"/>
<rect x="1290" y="449" width="1" height="25" fill="#ff0000"/>
<rect x="1288" y="464" width="5" height="6" fill="#ff0000"/>
<rect x="1289" y="465" width="3" height="4" fill="#fff"/>
<rect x="1298" y="451" width="1" height="39" fill="#008000"/>
<rect x="1296" y="463" width="5" height="5" fill="#008000"/>
<rect x="1306" y="444" width="1" height="29" fill="#ff0000"/>
<rect x="1304" y="458" width="5" height="11" fill="#ff0000"/>
<rect x="1305" y="459" width="3" height="9" fill="#fff"/>
<rect x="1314" y="419" width="1" height="50" fill="#ff0000"/>
<rect x="1312" y="421" width="5" height="37" fill="#ff0000"/>
<rect x="1313" y="422" width="3" height="35" fill="#fff"/>
<rect x="1322" y="396" width="1" height="30" fill="#ff0000"/>
<rect x="1320" y="411" width="5" height="10" fill="#ff0000"/>
<rect x="1321" y="412" width="3" height="8" fill="#fff"/>
<rect x="1330" y="399" width="1" height="19" fill="#008000"/>
<rect x="1328" y="410" width="5" height="6" fill="#008000"/>
<rect x="1338" y="388" width="1" height="39" fill="#ff0000"/>
<rect x="1336" y="417" width="5" height="1" fill="#ff0000"/>
<rect x="1346" y="402" width="1" height="21" fill="#008000"/>
<rect x="1344" y="415" width="5" height="4" fill="#008000"/>
<rect x="1353" y="417" width="1" height="29" fill="#008000"/>
<rect x="1351" y="419" width="5" height="26" fill="#008000"/>
<rect x="1361" y="437" width="1" height="30" fill="#008000"/>
<rect x="1359" y="446" width="5" height="18" fill="#008000"/>
<rect x="1369" y="449" width="1" height="16" fill="#ff0000"/>
<rect x="1367" y="457" width="5" height="7" fill="#ff0000"/>
<rect x="1368" y="458" width="3" height="5" fill="#fff"/>
<rect x="1377" y="436" width="1" height="27" fill="#008000"/>
<rect x="1375" y="458" width="5" height="1" fill="#008000"/>
<rect x="1385" y="434" width="1" height="30" fill="#ff0000"/>
<rect x="1383" y="454" width="5" height="5" fill="#ff0000"/>
<rect x="1384" y="455" width="3" height="3" fill="#fff"/>
<rect x="1393" y="447" width="1" height="36" fill="#008000"/>
<rect x="1391" y="452" width="5" height="18" fill="#008000"/>
<rect x="1401" y="465" width="1" height="22" fill="#008000"/>
<rect x="1399" y="472" width="5" height="13" fill="#008000"/>
<rect x="1408" y="471" width="1" height="26" fill="#ff0000"/>
<rect x="1406" y="476" width="5" height="4" fill="#ff0000"/>
<rect x="1407" y="477" width="3" height="2" fill="#fff"/>
<rect x="1416" y="435" width="1" height="44" fill="#ff0000"/>
<rect x="1414" y="449" width="5" height="27" fill="#ff0000"/>
<rect x="1415" y="450" width="3" height="25" fill="#fff"/>
<rect x="1424" y="427" width="1" height="23" fill="#ff0000"/>
<rect x="1422" y="430" width="5" height="19" fill="#ff0000"/>
<rect x="1423" y="431" width="3" height="17" fill="#fff"/>
<rect x="1432" y="421" width="1" height="17" fill="#008000"/>
<rect x="1430" y="429" width="5" height="6" fill="#008000"/>
<rect x="1440" y="400" width="1" height="42" fill="#008000"/>
<rect x="1438" y="431" width="5" height="4" fill="#008000"/>
<rect x="1448" y="432" width="1" height="39" fill="#008000"/>
<rect x="1446" y="433" width="5" height="24" fill="#008000"/>
<rect x="1456" y="438" width="1" height="22" fill="#ff0000"/>
<rect x="1454" y="447" width="5" height="11" fill="#ff0000"/>
<rect x="1455" y="448" width="3" height="9" fill="#fff"/>
<rect x="1464" y="442" width="1" height="25" fill="#008000"/>
<rect x="1462" y="446" width="5" height="20" fill="#008000"/>
<rect x="1471" y="463" width="1" height="37" fill="#008000"/>
<rect x="1469" y="465" width="5" height="32" fill="#008000"/>
<rect x="1479" y="489" width="1" height="67" fill="#008000"/>
<rect x="1477" y="498" width="5" height="52" fill="#008000"/>
<rect x="1487" y="539" width="1" height="47" fill="#008000"/>
<rect x="1485" y="549" width="5" height="22" fill="#008000"/>
<rect x="1495" y="539" width="1" height="70" fill="#008000"/>
<rect x="1493" y="570" width="5" height="35" fill="#008000"/>
<rect x="1503" y="601" width="1" height="48" fill="#008000"/>
<rect x="1501" y="604" width="5" height="43" fill="#008000"/>
<rect x="1511" y="635" width="1" height="39" fill="#008000"/>
<rect x="1509" y="646" width="5" height="11" fill="#008000"/>
<rect x="1519" y="641" width="1" height="30" fill="#008000"/>
<rect x="1517" y="657" width="5" height="4" fill="#008000"/>
<rect x="1526" y="644" width="1" height="34" fill="#008000"/>
<rect x="1524" y="662" width="5" height="2" fill="#008000"/>
<rect x="1534" y="632" width="1" height="51" fill="#ff0000"/>
<rect x="1532" y="637" width="5" height="25" fill="#ff0000"/>
<rect x="1533" y="638" width="3" height="23" fill="#fff"/>
<rect x="1542" y="573" width="1" height="65" fill="#ff0000"/>
<rect x="1540" y="579" width="5" height="59" fill="#ff0000"/>
<rect x="1541" y="580" width="3" height="57" fill="#fff"/>
<rect x="1550" y="569" width="1" height="27" fill="#008000"/>
<rect x="1548" y="578" width="5" height="3" fill="#008000"/>
<rect x="1558" y="545" width="1" height="39" fill="#ff0000"/>
<rect x="1556" y="552" width="5" height="28" fill="#ff0000"/>
<rect x="1557" y="553" width="3" height="26" fill="#fff"/>
<rect x="1566" y="529" width="1" height="37" fill="#008000"/>
<rect x="1564" y="551" width="5" height="12" fill="#008000"/>
<rect x="1574" y="430" width="1" height="134" fill="#ff0000"/>
<rect x="1572" y="431" width="5" height="133" fill="#ff0000"/>
<rect x="1573" y="432" width="3" height="131" fill="#fff"/>
<rect x="1582" y="426" width="1" height="57" fill="#008000"/>
<rect x="1580" y="430" width="5" height="28" fill="#008000"/>
<rect x="1589" y="432" width="1" height="40" fill="#ff0000"/>
<rect x="1587" y="450" width="5" height="6" fill="#ff0000"/>
<rect x="1588" y="451" width="3" height="4" fill="#fff"/>
<rect x="1597" y="368" width="1" height="84" fill="#ff0000"/>
<rect x="1595" y="400" width="5" height="49" fill="#ff0000"/>
<rect x="1596" y="401" width="3" height="47" fill="#fff"/>
<rect x="1605" y="337" width="1" height="70" fill="#ff0000"/>
<rect x="1603" y="346" width="5" height="53" fill="#ff0000"/>
<rect x="1604" y="347" width="3" height="51" fill="#fff"/>
<rect x="1613" y="297" width="1" height="53" fill="#ff0000"/>
<rect x="1611" y="331" width="5" height="15" fill="#ff0000"/>
<rect x="1612" y="332" width="3" height="13" fill="#fff"/>
<rect x="1621" y="327" width="1" height="38" fill="#008000"/>
<rect x="1619" y="331" width="5" height="17" fill="#008000"/>
<rect x="1629" y="331" width="1" height="56" fill="#008000"/>
<rect x="1627" y="348" width="5" height="3" fill="#008000"/>
<rect x="1637" y="317" width="1" height="51" fill="#ff0000"/>
<rect x="1635" y="334" width="5" height="16" fill="#ff0000"/>
<rect x="1636" y="335" width="3" height="14" fill="#fff"/>
<rect x="1644" y="305" width="1" height="45" fill="#ff0000"/>
<rect x="1642" y="323" width="5" height="8" fill="#ff0000"/>
<rect x="1643" y="324" width="3" height="6" fill="#fff"/>
<rect x="1652" y="272" width="1" height="67" fill="#ff0000"/>
<rect x="1650" y="279" width="5" height="44" fill="#ff0000"/>
<rect x="1651" y="280" width="3" height="42" fill="#fff"/>
<rect x="1660" y="277" width="1" height="33" fill="#008000"/>
<rect x="1658" y="279" width="5" height="21" fill="#008000"/>
<rect x="1668" y="275" width="1" height="60" fill="#008000"/>
<rect x="1666" y="301" width="5" height="23" fill="#008000"/>
<rect x="1676" y="305" width="1" height="49" fill="#008000"/>
<rect x="1674" y="325" width="5" height="3" fill="#008000"/>
<rect x="1684" y="310" width="1" height="26" fill="#ff0000"/>
<rect x="1682" y="321" width="5" height="7" fill="#ff0000"/>
<rect x="1683" y="322" width="3" height="5" fill="#fff"/>
<rect x="1692" y="283" width="1" height="43" fill="#ff0000"/>
<rect x="1690" y="307" width="5" height="14" fill="#ff0000"/>
<rect x="1691" y="308" width="3" height="12" fill="#fff"/>
<rect x="1700" y="305" width="1" height="34" fill="#008000"/>
<rect x="1698" y="307" width="5" height="31" fill="#008000"/>
<rect x="1707" y="336" width="1" height="45" fill="#008000"/>
<rect x="1705" y="338" width="5" height="18" fill="#008000"/>
<rect x="1715" y="351" width="1" height="49" fill="#008000"/>
<rect x="1713" y="357" width="5" height="38" fill="#008000"/>
<rect x="1723" y="362" width="1" height="44" fill="#ff0000"/>
<rect x="1721" y="378" width="5" height="17" fill="#ff0000"/>
<rect x="1722" y="379" width="3" height="15" fill="#fff"/>
<rect x="1731" y="372" width="1" height="58" fill="#008000"/>
<rect x="1729" y="377" width="5" height="42" fill="#008000"/>
<rect x="1739" y="396" width="1" height="44" fill="#ff0000"/>
<rect x="1737" y="403" width="5" height="19" fill="#ff0000"/>
<rect x="1738" y="404" width="3" height="17" fill="#fff"/>
<rect x="1747" y="351" width="1" height="68" fill="#ff0000"/>
<rect x="1745" y="368" width="5" height="35" fill="#ff0000"/>
<rect x="1746" y="369" width="3" height="33" fill="#fff"/>
<rect x="1755" y="342" width="1" height="41" fill="#008000"/>
<rect x="1753" y="369" width="5" height="7" fill="#008000"/>
<rect x="1762" y="316" width="1" height="66" fill="#ff0000"/>
<rect x="1760" y="330" width="5" height="44" fill="#ff0000"/>
<rect x="1761" y="331" width="3" height="42" fill="#fff"/>
<rect x="1770" y="305" width="1" height="33" fill="#008000"/>
<rect x="1768" y="331" width="5" height="1" fill="#008000"/>
<rect x="1778" y="322" width="1" height="41" fill="#008000"/>
<rect x="1776" y="331" width="5" height="7" fill="#008000"/>
<rect x="1786" y="276" width="1" height="62" fill="#ff0000"/>
<rect x="1784" y="295" width="5" height="42" fill="#ff0000"/>
<rect x="1785" y="296" width="3" height="40" fill="#fff"/>
<rect x="1794" y="278" width="1" height="41" fill="#008000"/>
<rect x="1792" y="294" width="5" height="19" fill="#008000"/>
<rect x="1802" y="294" width="1" height="21" fill="#ff0000"/>
<rect x="1800" y="307" width="5" height="7" fill="#ff0000"/>
<rect x="1801" y="308" width="3" height="5" fill="#fff"/>
<rect x="1810" y="284" width="1" height="26" fill="#ff0000"/>
<rect x="1808" y="287" width="5" height="19" fill="#ff0000"/>
<rect x="1809" y="288" width="3" height="17" fill="#fff"/>
<rect x="1818" y="254" width="1" height="37" fill="#ff0000"/>
<rect x="1816" y="262" width="5" height="19" fill="#ff0000"/>
<rect x="1817" y="263" width="3" height="17" fill="#fff"/>
<rect x="1825" y="202" width="1" height="66" fill="#ff0000"/>
<rect x="1823" y="207" width="5" height="54" fill="#ff0000"/>
<rect x="1824" y="208" width="3" height="52" fill="#fff"/>
<rect x="1833" y="183" width="1" height="35" fill="#ff0000"/>
<rect x="1831" y="201" width="5" height="6" fill="#ff0000"/>
<rect x="1832" y="202" width="3" height="4" fill="#fff"/>
<rect x="1841" y="194" width="1" height="33" fill="#008000"/>
<rect x="1839" y="198" width="5" height="19" fill="#008000"/>
<rect x="1849" y="135" width="1" height="87" fill="#ff0000"/>
<rect x="1847" y="143" width="5" height="73" fill="#ff0000"/>
<rect x="1848" y="144" width="3" height="71" fill="#fff"/>
<rect x="1857" y="61" width="1" height="189" fill="#008000"/>
<rect x="1855" y="145" width="5" height="86" fill="#008000"/>
<rect x="1865" y="206" width="1" height="65" fill="#008000"/>
<rect x="1863" y="230" width="5" height="22" fill="#008000"/>
<rect x="1873" y="217" width="1" height="39" fill="#ff0000"/>
<rect x="1871" y="239" width="5" height="12" fill="#ff0000"/>
<rect x="1872" y="240" width="3" height="10" fill="#fff"/>
<rect x="1881" y="208" width="1" height="42" fill="#ff0000"/>
<rect x="1879" y="233" width="5" height="5" fill="#ff0000"/>
<rect x="1880" y="234" width="3" height="3" fill="#fff"/>
<rect x="1888" y="221" width="1" height="82" fill="#008000"/>
<rect x="1886" y="233" width="5" height="49" fill="#008000"/>
<rect x="1896" y="274" width="1" height="68" fill="#008000"/>
<rect x="1894" y="282" width="5" height="48" fill="#008000"/>
<rect x="1904" y="298" width="1" height="41" fill="#008000"/>
<rect x="1902" y="329" width="5" height="6" fill="#008000"/>
<rect x="1912" y="234" width="1" height="114" fill="#ff0000"/>
<rect x="1910" y="235" width="5" height="99" fill="#ff0000"/>
<rect x="1911" y="236" width="3" height="97" fill="#fff"/>
<rect x="1920" y="210" width="1" height="32" fill="#ff0000"/>
<rect x="1918" y="226" width="5" height="8" fill="#ff0000"/>
<rect x="1919" y="227" width="3" height="6" fill="#fff"/>
<rect x="517.5" y="199.5" width="52" height="21" fill="none" stroke="#009999" stroke-width="3"/>
<rect x="645.5" y="176.5" width="47" height="18" fill="none" stroke="#009999" stroke-width="3"/>
<rect x="1808.5" y="128.5" width="76" height="25" fill="none" stroke="#009999" stroke-width="3"/>
<rect x="1858" y="61" width="17" height="1" fill="#000"/>
<rect x="300" y="695" width="17" height="1" fill="#000"/>
<rect x="55" y="708" width="1" height="5" fill="#808080"/>
<rect x="95" y="708" width="1" height="5" fill="#808080"/>
<rect x="134" y="708" width="1" height="5" fill="#808080"/>
<rect x="173" y="708" width="1" height="5" fill="#808080"/>
<rect x="213" y="708" width="1" height="5" fill="#808080"/>
<rect x="252" y="708" width="1" height="5" fill="#808080"/>
<rect x="291" y="708" width="1" height="5" fill="#808080"/>
<rect x="331" y="708" width="1" height="5" fill="#808080"/>
<rect x="370" y="708" width="1" height="5" fill="#808080"/>
<rect x="409" y="708" width="1" height="5" fill="#808080"/>
<rect x="449" y="708" width="1" height="5" fill="#808080"/>
<rect x="519" y="708" width="1" height="5" fill="#808080"/>
<rect x="559" y="708" width="1" height="5" fill="#808080"/>
<rect x="598" y="708" width="1" height="5" fill="#808080"/>
<rect x="677" y="708" width="1" height="5" fill="#808080"/>
<rect x="716" y="708" width="1" height="5" fill="#808080"/>
<rect x="755" y="708" width="1" height="5" fill="#808080"/>
<rect x="795" y="708" width="1" height="5" fill="#808080"/>
<rect x="834" y="708" width="1" height="5" fill="#808080"/>
<rect x="873" y="708" width="1" height="5" fill="#808080"/>
<rect x="913" y="708" width="1" height="5" fill="#808080"/>
<rect x="952" y="708" width="1" height="5" fill="#808080"/>
<rect x="1031" y="708" width="1" height="5" fill="#808080"/>
<rect x="1070" y="708" width="1" height="5" fill="#808080"/>
<rect x="1109" y="708" width="1" height="5" fill="#808080"/>
<rect x="1149" y="708" width="1" height="5" fill="#808080"/>
<rect x="1188" y="708" width="1" height="5" fill="#808080"/>
<rect x="1227" y="708" width="1" height="5" fill="#808080"/>
<rect x="1267" y="708" width="1" height="5" fill="#808080"/>
<rect x="1306" y="708" width="1" height="5" fill="#808080"/>
<rect x="1346" y="708" width="1" height="5" fill="#808080"/>
<rect x="1385" y="708" width="1" height="5" fill="#808080"/>
<rect x="1424" y="708" width="1" height="5" fill="#808080"/>
<rect x="1464" y="708" width="1" height="5" fill="#808080"/>
<rect x="1542" y="708" width="1" height="5" fill="#808080"/>
<rect x="1582" y="708" width="1" height="5" fill="#808080"/>
<rect x="1621" y="708" width="1" height="5" fill="#808080"/>
<rect x="1660" y="708" width="1" height="5" fill="#808080"/>
<rect x="1700" y="708" width="1" height="5" fill="#808080"/>
<rect x="1739" y="708" width="1" height="5" fill="#808080"/>
<rect x="1778" y="708" width="1" height="5" fill="#808080"/>
<rect x="1818" y="708" width="1" height="5" fill="#808080"/>
<rect x="1857" y="708" width="1" height="5" fill="#808080"/>
<rect x="1896" y="708" width="1" height="5" fill="#808080"/>
<rect x="1936" y="708" width="1" height="5" fill="#808080"/>
<rect x="1975" y="708" width="1" height="5" fill="#808080"/>
<rect x="2054" y="708" width="1" height="5" fill="#808080"/>
<rect x="2093" y="708" width="1" height="5" fill="#808080"/>
<rect x="2132" y="708" width="1" height="5" fill="#808080"/>
<rect x="150" y="708" width="1" height="9" fill="#808080"/>
<rect x="307" y="708" width="1" height="9" fill="#808080"/>
<rect x="488" y="708" width="1" height="9" fill="#808080"/>
<rect x="637" y="708" width="1" height="9" fill="#808080"/>
<rect x="818" y="708" width="1" height="9" fill="#808080"/>
<rect x="991" y="708" width="1" height="9" fill="#808080"/>
<rect x="1157" y="708" width="1" height="9" fill="#808080"/>
<rect x="1338" y="708" width="1" height="9" fill="#808080"/>
<rect x="1503" y="708" width="1" height="9" fill="#808080"/>
<rect x="1676" y="708" width="1" height="9" fill="#808080"/>
<rect x="1849" y="708" width="1" height="9" fill="#808080"/>
<rect x="8" y="708" width="1" height="18" fill="#808080"/>
<rect x="2014" y="708" width="1" height="18" fill="#808080"/>
</svg>
<svg style="position:absolute;left:0;top:0" width="2205" height="737" viewBox="0 0 2205 737">
<text x="152" y="721" font-size="14" fill="#808080">02</text>
<text x="309" y="721" font-size="14" fill="#808080">03</text>
<text x="490" y="721" font-size="14" fill="#808080">04</text>
<text x="639" y="721" font-size="14" fill="#808080">05</text>
<text x="820" y="721" font-size="14" fill="#808080">06</text>
<text x="993" y="721" font-size="14" fill="#808080">07</text>
<text x="1159" y="721" font-size="14" fill="#808080">08</text>
<text x="1340" y="721" font-size="14" fill="#808080">09</text>
<text x="1505" y="721" font-size="14" fill="#808080">10</text>
<text x="1678" y="721" font-size="14" fill="#808080">11</text>
<text x="1851" y="721" font-size="14" fill="#808080">12</text>
<text x="10" y="721" font-size="14" fill="#808080">2023</text>
<text x="2016" y="721" font-size="14" fill="#808080">2024</text>
<text x="2159.6" y="90.0" font-size="14" fill="#808080">2100.00</text>
<text x="2159.6" y="131.0" font-size="14" fill="#808080">2080.00</text>
<text x="2159.6" y="172.0" font-size="14" fill="#808080">2060.00</text>
<text x="2159.6" y="213.0" font-size="14" fill="#808080">2040.00</text>
<text x="2159.6" y="255.0" font-size="14" fill="#808080">2020.00</text>
<text x="2159.6" y="296.0" font-size="14" fill="#808080">2000.00</text>
<text x="2159.6" y="337.0" font-size="14" fill="#808080">1980.00</text>
<text x="2159.6" y="379.0" font-size="14" fill="#808080">1960.00</text>
<text x="2159.6" y="420.0" font-size="14" fill="#808080">1940.00</text>
<text x="2159.6" y="461.0" font-size="14" fill="#808080">1920.00</text>
<text x="2159.6" y="503.0" font-size="14" fill="#808080">1900.00</text>
<text x="2159.6" y="544.0" font-size="14" fill="#808080">1880.00</text>
<text x="2159.6" y="585.0" font-size="14" fill="#808080">1860.00</text>
<text x="2159.6" y="627.0" font-size="14" fill="#808080">1840.00</text>
<text x="2159.6" y="668.0" font-size="14" fill="#808080">1820.00</text>
<text x="2159.6" y="705" font-size="14" fill="#808080">1800.00</text>
<polygon points="2157,226 2163,218 2205,218 2205,234 2163,234" fill="#f1f5ee"/>
<text x="2158.3" y="231" font-size="14" fill="#ff0000">2031.31</text>
<rect x="2194.5" y="19.5" width="12" height="11" fill="none" stroke="#e8500a" stroke-width="1"/>
<text x="2168" y="722" font-size="14" fill="#e8500a">日线</text>
<text x="3" y="156" font-size="14" fill="#0080c0">2072.18</text>
<text x="3" y="199" font-size="14" fill="#ff0000">2051.37</text>
<text x="3" y="222" font-size="14" fill="#0000ff">2040.23</text>
<text x="1877" y="67" font-size="14" fill="#000">2111.39</text>
<text x="319.5" y="692" font-size="14" fill="#000">1804.50</text>
<text x="18.2" y="465.9" class="m" font-size="11" text-anchor="middle" fill="#ff00ff">8</text>
<text x="26.2" y="467.9" class="m" font-size="11" text-anchor="middle" fill="#00ff00">9</text>
<text x="10.2" y="490.1" class="m" font-size="11" text-anchor="middle" fill="#ff00ff">7</text>
<text x="159.1" y="562.0" class="m" font-size="11" text-anchor="middle" fill="#ff00ff">1</text>
<text x="167.1" y="665.4" class="m" font-size="11" text-anchor="middle" fill="#ff00ff">2</text>
<text x="175.6" y="666.1" class="m" font-size="11" text-anchor="middle" fill="#ff00ff">3</text>
<text x="183.3" y="657.1" class="m" font-size="11" text-anchor="middle" fill="#ff00ff">4</text>
<text x="191.3" y="648.1" class="m" font-size="11" text-anchor="middle" fill="#ff00ff">5</text>
<text x="199.1" y="670.1" class="m" font-size="11" text-anchor="middle" fill="#ff00ff">6</text>
<text x="207.3" y="681.8" class="m" font-size="11" text-anchor="middle" fill="#ff00ff">7</text>
<text x="215.3" y="686.6" class="m" font-size="11" text-anchor="middle" fill="#ff00ff">8</text>
<text x="222.3" y="692.8" class="m" font-size="11" text-anchor="middle" fill="#00ff00">9</text>
<text x="364.2" y="490.1" class="m" font-size="11" text-anchor="middle" fill="#ff00ff">1</text>
<text x="372.5" y="396.0" class="m" font-size="11" text-anchor="middle" fill="#ff00ff">2</text>
<text x="380.4" y="396.7" class="m" font-size="11" text-anchor="middle" fill="#ff00ff">3</text>
<text x="411.4" y="196.0" class="m" font-size="11" text-anchor="middle" fill="#ff00ff">7</text>
<text x="403.4" y="238.9" class="m" font-size="11" text-anchor="middle" fill="#ff00ff">6</text>
<text x="419.4" y="247.9" class="m" font-size="11" text-anchor="middle" fill="#ff00ff">8</text>
<text x="427.4" y="260.9" class="m" font-size="11" text-anchor="middle" fill="#00ff00">9</text>
<text x="388.4" y="349.1" class="m" font-size="11" text-anchor="middle" fill="#ff00ff">4</text>
<text x="396.4" y="356.8" class="m" font-size="11" text-anchor="middle" fill="#ff00ff">5</text>
<text x="687.5" y="342.7" class="m" font-size="11" text-anchor="middle" fill="#ff00ff">1</text>
<text x="694.4" y="339.5" class="m" font-size="11" text-anchor="middle" fill="#ff00ff">2</text>
<text x="702.4" y="360.0" class="m" font-size="11" text-anchor="middle" fill="#ff00ff">3</text>
<text x="710.4" y="381.2" class="m" font-size="11" text-anchor="middle" fill="#ff00ff">4</text>
<text x="718.4" y="368.0" class="m" font-size="11" text-anchor="middle" fill="#ff00ff">5</text>
<text x="726.4" y="411.9" class="m" font-size="11" text-anchor="middle" fill="#ff00ff">6</text>
<text x="734.4" y="432.9" class="m" font-size="11" text-anchor="middle" fill="#ff00ff">7</text>
<text x="742.4" y="480.1" class="m" font-size="11" text-anchor="middle" fill="#ff00ff">8</text>
<text x="750.4" y="475.8" class="m" font-size="11" text-anchor="middle" fill="#00ff00">9</text>
<text x="923.2" y="525.2" class="m" font-size="11" text-anchor="middle" fill="#ff00ff">1</text>
<text x="931.2" y="546.2" class="m" font-size="11" text-anchor="middle" fill="#ff00ff">2</text>
<text x="938.7" y="560.2" class="m" font-size="11" text-anchor="middle" fill="#ff00ff">3</text>
<text x="946.4" y="565.2" class="m" font-size="11" text-anchor="middle" fill="#ff00ff">4</text>
<text x="954.4" y="540.9" class="m" font-size="11" text-anchor="middle" fill="#ff00ff">5</text>
<text x="962.4" y="561.9" class="m" font-size="11" text-anchor="middle" fill="#ff00ff">6</text>
<text x="970.4" y="580.1" class="m" font-size="11" text-anchor="middle" fill="#ff00ff">7</text>
<text x="978.4" y="598.9" class="m" font-size="11" text-anchor="middle" fill="#ff00ff">8</text>
<text x="986.4" y="583.9" class="m" font-size="11" text-anchor="middle" fill="#00ff00">9</text>
<text x="1041.2" y="346.4" class="m" font-size="11" text-anchor="middle" fill="#ff00ff">1</text>
<text x="1049.5" y="301.2" class="m" font-size="11" text-anchor="middle" fill="#ff00ff">2</text>
<text x="1056.4" y="292.7" class="m" font-size="11" text-anchor="middle" fill="#ff00ff">3</text>
<text x="1064.4" y="293.4" class="m" font-size="11" text-anchor="middle" fill="#ff00ff">4</text>
<text x="1072.4" y="300.9" class="m" font-size="11" text-anchor="middle" fill="#ff00ff">5</text>
<text x="1080.4" y="249.7" class="m" font-size="11" text-anchor="middle" fill="#ff00ff">6</text>
<text x="1088.4" y="257.0" class="m" font-size="11" text-anchor="middle" fill="#ff00ff">7</text>
<text x="1096.4" y="243.0" class="m" font-size="11" text-anchor="middle" fill="#ff00ff">8</text>
<text x="1104.4" y="272.0" class="m" font-size="11" text-anchor="middle" fill="#00ff00">9</text>
<text x="1159.2" y="501.2" class="m" font-size="11" text-anchor="middle" fill="#ff00ff">1</text>
<text x="1166.9" y="518.2" class="m" font-size="11" text-anchor="middle" fill="#ff00ff">2</text>
<text x="1174.4" y="524.7" class="m" font-size="11" text-anchor="middle" fill="#ff00ff">3</text>
<text x="1182.4" y="534.2" class="m" font-size="11" text-anchor="middle" fill="#ff00ff">4</text>
<text x="1190.4" y="520.9" class="m" font-size="11" text-anchor="middle" fill="#ff00ff">5</text>
<text x="1198.4" y="538.9" class="m" font-size="11" text-anchor="middle" fill="#ff00ff">6</text>
<text x="1206.4" y="556.9" class="m" font-size="11" text-anchor="middle" fill="#ff00ff">7</text>
<text x="1214.4" y="560.9" class="m" font-size="11" text-anchor="middle" fill="#ff00ff">8</text>
<text x="1222.4" y="562.4" class="m" font-size="11" text-anchor="middle" fill="#00ff00">9</text>
<text x="1277.2" y="418.1" class="m" font-size="11" text-anchor="middle" fill="#ff00ff">1</text>
<text x="1285.2" y="384.2" class="m" font-size="11" text-anchor="middle" fill="#ff00ff">2</text>
<text x="1292.4" y="378.2" class="m" font-size="11" text-anchor="middle" fill="#ff00ff">3</text>
<text x="1300.4" y="380.4" class="m" font-size="11" text-anchor="middle" fill="#ff00ff">4</text>
<text x="1308.4" y="372.4" class="m" font-size="11" text-anchor="middle" fill="#ff00ff">5</text>
<text x="1316.4" y="347.2" class="m" font-size="11" text-anchor="middle" fill="#ff00ff">6</text>
<text x="1324.4" y="324.0" class="m" font-size="11" text-anchor="middle" fill="#ff00ff">7</text>
<text x="1332.4" y="326.0" class="m" font-size="11" text-anchor="middle" fill="#ff00ff">8</text>
<text x="1340.4" y="316.0" class="m" font-size="11" text-anchor="middle" fill="#00ff00">9</text>
<text x="1450.2" y="558.0" class="m" font-size="11" text-anchor="middle" fill="#ff00ff">1</text>
<text x="1458.2" y="547.0" class="m" font-size="11" text-anchor="middle" fill="#ff00ff">2</text>
<text x="1466.5" y="554.0" class="m" font-size="11" text-anchor="middle" fill="#ff00ff">3</text>
<text x="1473.4" y="587.4" class="m" font-size="11" text-anchor="middle" fill="#ff00ff">4</text>
<text x="1481.4" y="641.1" class="m" font-size="11" text-anchor="middle" fill="#ff00ff">5</text>
<text x="1489.4" y="670.1" class="m" font-size="11" text-anchor="middle" fill="#ff00ff">6</text>
<text x="1497.4" y="693.1" class="m" font-size="11" text-anchor="middle" fill="#ff00ff">7</text>
<text x="1505.4" y="693.1" class="m" font-size="11" text-anchor="middle" fill="#ff00ff">8</text>
<text x="1513.4" y="693.1" class="m" font-size="11" text-anchor="middle" fill="#00ff00">9</text>
<text x="1536.1" y="565.0" class="m" font-size="11" text-anchor="middle" fill="#ff00ff">1</text>
<text x="1544.4" y="504.1" class="m" font-size="11" text-anchor="middle" fill="#ff00ff">2</text>
<text x="1552.4" y="499.9" class="m" font-size="11" text-anchor="middle" fill="#ff00ff">3</text>
<text x="1560.6" y="475.2" class="m" font-size="11" text-anchor="middle" fill="#ff00ff">4</text>
<text x="1568.4" y="458.9" class="m" font-size="11" text-anchor="middle" fill="#ff00ff">5</text>
<text x="1576.4" y="358.2" class="m" font-size="11" text-anchor="middle" fill="#ff00ff">6</text>
<text x="1584.4" y="353.9" class="m" font-size="11" text-anchor="middle" fill="#ff00ff">7</text>
<text x="1591.4" y="360.9" class="m" font-size="11" text-anchor="middle" fill="#ff00ff">8</text>
<text x="1599.4" y="295.2" class="m" font-size="11" text-anchor="middle" fill="#00ff00">9</text>
<text x="1677.8" y="443.1" class="m" font-size="11" text-anchor="middle" fill="#ff00ff">1</text>
<text x="1686.3" y="425.1" class="m" font-size="11" text-anchor="middle" fill="#ff00ff">2</text>
<text x="1694.3" y="416.1" class="m" font-size="11" text-anchor="middle" fill="#ff00ff">3</text>
<text x="1702.3" y="429.1" class="m" font-size="11" text-anchor="middle" fill="#ff00ff">4</text>
<text x="1709.4" y="469.9" class="m" font-size="11" text-anchor="middle" fill="#ff00ff">5</text>
<text x="1717.4" y="488.9" class="m" font-size="11" text-anchor="middle" fill="#ff00ff">6</text>
<text x="1725.4" y="493.9" class="m" font-size="11" text-anchor="middle" fill="#ff00ff">7</text>
<text x="1733.4" y="518.1" class="m" font-size="11" text-anchor="middle" fill="#ff00ff">8</text>
<text x="1741.4" y="528.1" class="m" font-size="11" text-anchor="middle" fill="#00ff00">9</text>
<text x="1757.5" y="269.2" class="m" font-size="11" text-anchor="middle" fill="#ff00ff">2</text>
<text x="1764.5" y="241.9" class="m" font-size="11" text-anchor="middle" fill="#ff00ff">3</text>
<text x="1772.5" y="230.2" class="m" font-size="11" text-anchor="middle" fill="#ff00ff">4</text>
<text x="1780.5" y="248.2" class="m" font-size="11" text-anchor="middle" fill="#ff00ff">5</text>
<text x="1788.5" y="201.0" class="m" font-size="11" text-anchor="middle" fill="#ff00ff">6</text>
<text x="1796.5" y="203.0" class="m" font-size="11" text-anchor="middle" fill="#ff00ff">7</text>
<text x="1804.4" y="219.0" class="m" font-size="11" text-anchor="middle" fill="#ff00ff">8</text>
<text x="1812.4" y="208.7" class="m" font-size="11" text-anchor="middle" fill="#00ff00">9</text>
<text x="1749.3" y="278.0" class="m" font-size="11" text-anchor="middle" fill="#ff00ff">1</text>
</svg>
<span class="t k" style="left:3px;top:19px"><span class="cj">伦敦黄金</span></span>
<span class="t k" style="left:63px;top:19px">2023/12/14</span>
<span class="t r" style="left:140px;top:19px"><span class="cj">开</span>2027.75<span class="ar">↑</span></span>
<span class="t r" style="left:216px;top:19px"><span class="cj">高</span>2039.25<span class="ar">↑</span></span>
<span class="t g" style="left:291px;top:19px"><span class="cj">低</span>2023.80<span class="ar">↑</span></span>
<span class="t r" style="left:366px;top:19px"><span class="cj">收</span>2031.31<span class="ar">↑</span></span>
<span class="t k" style="left:440.5px;top:19px"><span class="cj">量</span>0</span>
<span class="t k" style="left:473px;top:19px"><span class="cj">仓</span>0</span>
<span class="t k" style="left:501px;top:19px"><span class="cj">增</span>0</span>
<span class="t k" style="left:527px;top:19px"><span class="cj">振</span>0.76%</span>
<span class="t r" style="left:586.5px;top:19px"><span class="cj">涨</span>(4.31)0.21%<span class="ar">↑</span></span>
<span class="t k" style="left:3px;top:39px">九转序列</span>
<span class="t" style="left:3px;top:729px;color:#000;letter-spacing:0;font-size:14px">MACD(12,26,9)</span>
<span class="t" style="left:112px;top:729px;color:#000080;letter-spacing:0;font-size:13.6px">DIF 1143.481<span class="ar">↑</span></span>
<span class="t" style="left:211px;top:729px;color:#ff4500;letter-spacing:0;font-size:13.6px">DEA 1485.151<span class="ar">↓</span></span>
<span class="t" style="left:317px;top:729px;color:#808080;letter-spacing:0;font-size:13.6px">MACD -683.339<span class="ar">↑</span></span>
<span class="t" style="left:433px;top:729px;color:#800000;letter-spacing:0;font-size:13.6px">B 0</span>
<span class="t" style="left:460px;top:729px;color:#008000;letter-spacing:0;font-size:13.6px">BC 0</span>
<span class="t" style="left:499px;top:729px;color:#00c8d8;letter-spacing:0;font-size:13.6px">T 0</span>
<span class="t" style="left:527px;top:729px;color:#ff00ff;letter-spacing:0;font-size:13.6px">TC 0</span>
</body></html>
